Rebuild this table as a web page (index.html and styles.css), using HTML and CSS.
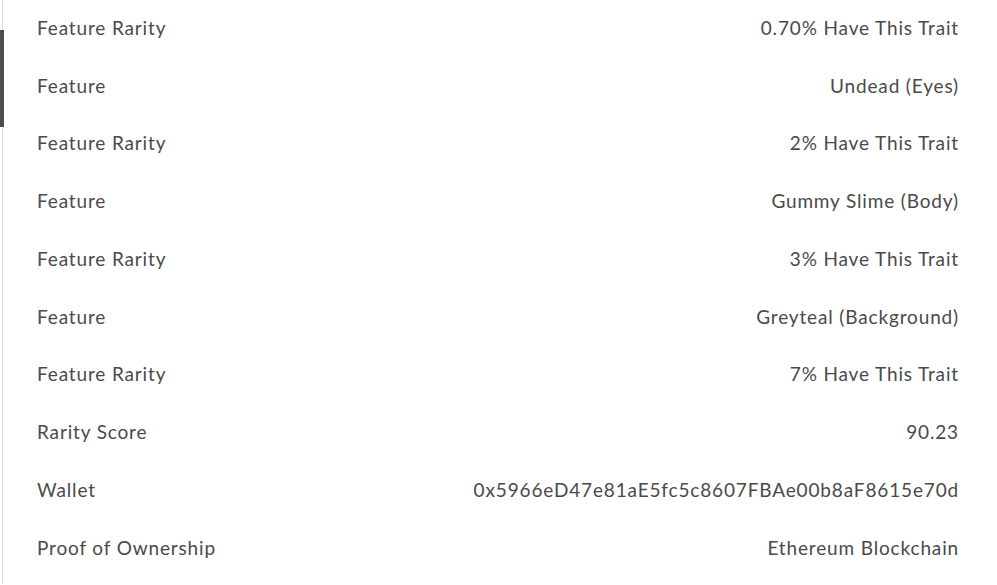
FILE: index.html
```html
<!DOCTYPE html>
<html>
<head>
<meta charset="utf-8">
<link rel="stylesheet" href="styles.css">
</head>
<body>
<div class="panel">
  <span class="indicator"></span>
  <div class="list">
    <div class="row"><span class="label">Feature Rarity</span><span class="value">0.70% Have This Trait</span></div>
    <div class="row"><span class="label">Feature</span><span class="value">Undead (Eyes)</span></div>
    <div class="row"><span class="label">Feature Rarity</span><span class="value">2% Have This Trait</span></div>
    <div class="row"><span class="label">Feature</span><span class="value">Gummy Slime (Body)</span></div>
    <div class="row"><span class="label">Feature Rarity</span><span class="value">3% Have This Trait</span></div>
    <div class="row"><span class="label">Feature</span><span class="value">Greyteal (Background)</span></div>
    <div class="row"><span class="label">Feature Rarity</span><span class="value">7% Have This Trait</span></div>
    <div class="row"><span class="label">Rarity Score</span><span class="value">90.23</span></div>
    <div class="row"><span class="label">Wallet</span><span class="value">0x5966eD47e81aE5fc5c8607FBAe00b8aF8615e70d</span></div>
    <div class="row"><span class="label">Proof of Ownership</span><span class="value">Ethereum Blockchain</span></div>
  </div>
</div>
</body>
</html>
```
FILE: styles.css
```css
html, body {
  margin: 0;
  padding: 0;
  background: #ffffff;
}
body {
  font-family: "Lato", "Open Sans", sans-serif;
  font-size: 19px;
  letter-spacing: 0.85px;
  color: #4a4a4a;
  overflow: hidden;
}
.panel {
  position: relative;
  margin-left: 2px;
  border-left: 1px solid #dcdcdc;
  height: 585px;
}
.indicator {
  position: absolute;
  left: -3px;
  top: 31px;
  width: 4px;
  height: 97px;
  background: #4d4d4d;
}
.list {
  margin-top: -1.5px;
  padding: 0 38px 0 34px;
}
.row {
  height: 57.75px;
  display: flex;
  align-items: center;
  justify-content: space-between;
}
.value {
  text-align: right;
}
```
